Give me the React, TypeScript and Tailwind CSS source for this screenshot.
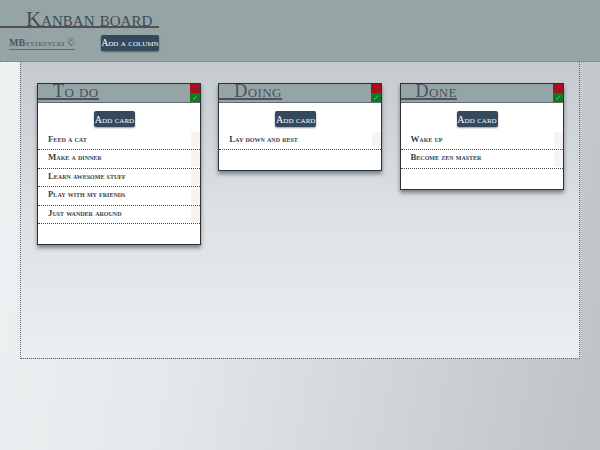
const serif = "font-['Liberation_Serif',serif] [font-variant:small-caps]";

function Column({ title, cards }: { title: string; cards: string[] }) {
  return (
    <section className="w-[164px] shrink-0 self-start border border-[#2c3136] bg-white shadow-[0_3px_4px_rgba(40,50,60,0.55)]">
      <div className="flex h-[19px] justify-between border-b border-[#5f6b6d] bg-[#95a5a6]">
        <h2 className={`${serif} h-[16px] border-b-2 border-[#4b5557] pl-[15px] text-[18px] leading-[15px] tracking-[0.4px] text-[#48525a]`}>
          {title}
        </h2>
        <div className="flex w-[10px] flex-col">
          <div className="h-[9px] bg-[#a50f1e]" />
          <div className="flex h-[10px] items-center justify-center bg-[#0c7a1f]">
            <svg width="6" height="6" viewBox="0 0 6 6" fill="none" stroke="#7fb08a" strokeWidth="1">
              <path d="M1 4.5 L2 5.2 L5 1.5" />
            </svg>
          </div>
        </div>
      </div>
      <div className="flex justify-center pt-2 pr-[9px] pb-[4.5px]">
        <button className={`${serif} h-[16px] w-[41px] rounded-[2px] bg-[#34495e] text-[10px] leading-[15px] whitespace-nowrap text-white shadow-[0_1px_2px_rgba(0,0,0,0.4)]`}>
          Add card
        </button>
      </div>
      <ul className="pb-[20px]">
        {cards.map((c) => (
          <li key={c} className="flex h-[18.5px] items-center justify-between border-b border-dotted border-[#444]">
            <span className={`${serif} pb-[2px] pl-[10px] text-[8.8px] font-bold leading-none whitespace-nowrap text-[#3a3f44]`}>{c}</span>
            <span className="h-[16px] w-[9px] bg-[#faf3f3]" />
          </li>
        ))}
      </ul>
    </section>
  );
}

export default function App() {
  return (
    <div className="h-[450px] w-[600px] overflow-hidden bg-[linear-gradient(100deg,#eff2f3_0%,#e4e8ea_35%,#bcc2c6_100%)]">
      <header className="h-[62px] border-b border-dotted border-[#6f7b7d] bg-[#95a5a6] pt-[10px]">
        <h1 className={`${serif} h-[18px] w-[159px] border-b-2 border-[#5a4d52] pl-[26px] text-[21px] leading-[19px] whitespace-nowrap text-[#3f4a54]`}>
          Kanban board
        </h1>
        <div className="mt-[7px] flex h-[16px] items-center pl-[9px]">
          <div className="flex w-[92px] leading-none">
            <span className={`${serif} border-b border-[#5f6b6d] pb-[1px] text-[10px] leading-[11px] whitespace-nowrap text-[#4a5560]`}>
              <span className="font-bold">MB</span>ystrzycki ©
            </span>
          </div>
          <button className={`${serif} h-[16px] w-[58px] rounded-[2px] bg-[#34495e] text-[9.5px] leading-[15px] whitespace-nowrap text-white shadow-[0_1px_2px_rgba(0,0,0,0.4)]`}>
            Add a column
          </button>
        </div>
      </header>
      <main className="mx-[20px] flex h-[297px] gap-[17.25px] border border-t-0 border-dotted border-[#666] bg-[linear-gradient(180deg,#c5cacf_0%,#dde1e4_50%,#eceff1_100%)] pt-[21px] pl-[16px]">
        <Column title="To do" cards={["Feed a cat", "Make a dinner", "Learn awesome stuff", "Play with my friends", "Just wander around"]} />
        <Column title="Doing" cards={["Lay down and rest"]} />
        <Column title="Done" cards={["Wake up", "Become zen master"]} />
      </main>
    </div>
  );
}
